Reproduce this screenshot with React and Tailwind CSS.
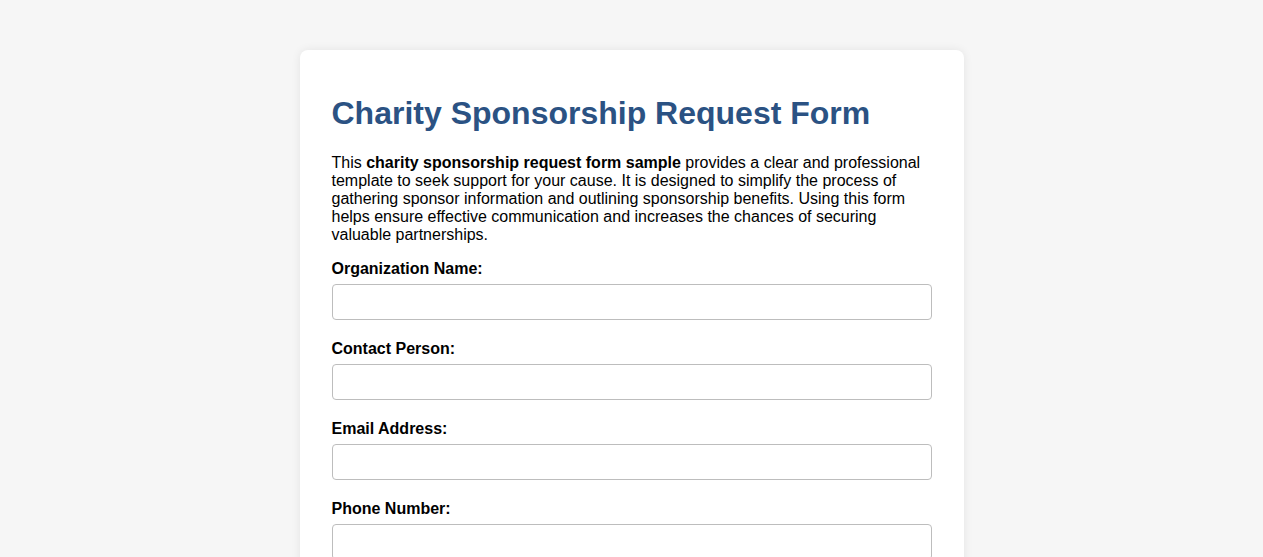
export default function App() {
  const fields = ["Organization Name:", "Contact Person:", "Email Address:", "Phone Number:"];
  return (
    <div className="min-h-screen bg-[#f6f6f6] pt-[50px] pb-10" style={{ fontFamily: '"Liberation Sans", Arial, sans-serif' }}>
      <div className="mx-auto w-[664px] rounded-lg bg-white px-8 pt-[45px] pb-8 shadow-[0_0_10px_rgba(0,0,0,0.08)]">
        <h1 className="text-[32px] font-bold leading-[37px] text-[#2b5283]">Charity Sponsorship Request Form</h1>
        <p className="mt-[22px] text-base leading-[18px] text-black">
          This <strong>charity sponsorship request form sample</strong> provides a clear and professional template to seek support for your cause. It is designed to simplify the process of gathering sponsor information and outlining sponsorship benefits. Using this form helps ensure effective communication and increases the chances of securing valuable partnerships.
        </p>
        {fields.map((f, i) => (
          <div key={f} className={i === 0 ? "mt-[16px]" : "mt-[20px]"}>
            <label className="block text-base font-bold leading-[18px] text-black">{f}</label>
            <input type="text" className="mt-[6px] block h-[36px] w-full rounded border border-[#bdbdbd] px-2 text-base outline-none" />
          </div>
        ))}
      </div>
    </div>
  );
}
